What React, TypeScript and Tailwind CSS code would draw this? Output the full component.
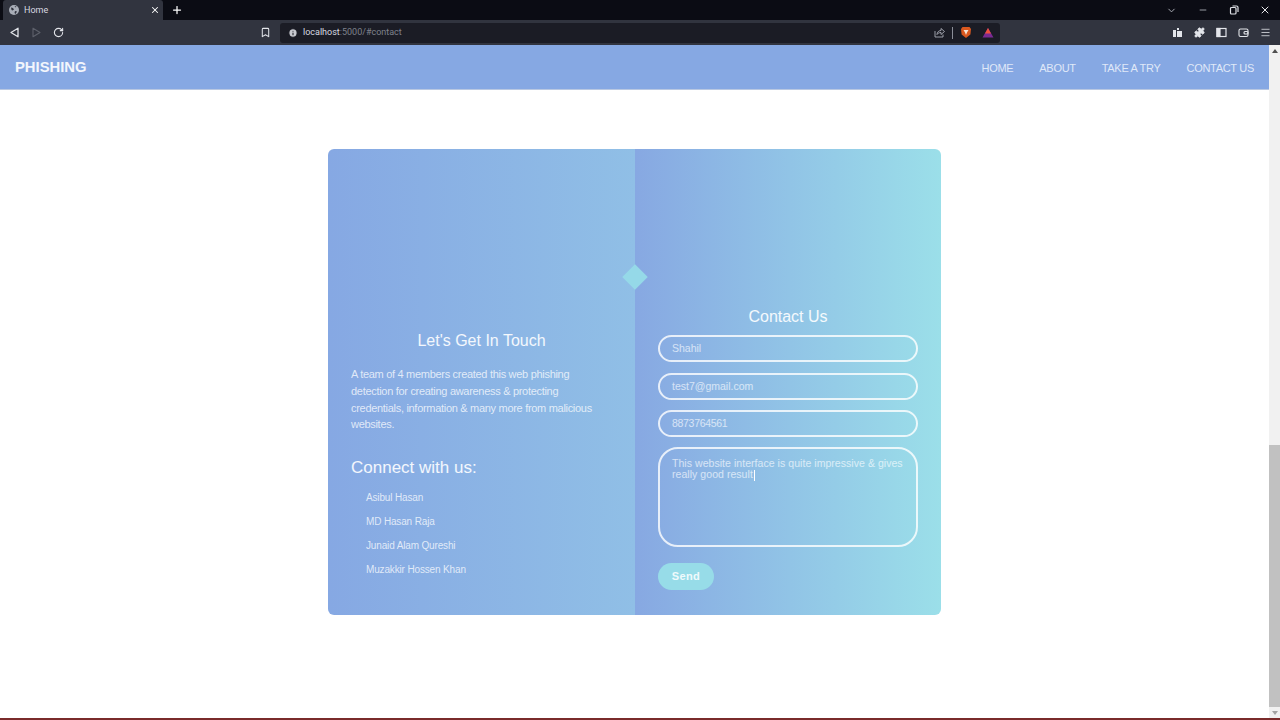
import { ChevronDown, Minus, Puzzle, X, Plus, RotateCw, Bookmark, Info, Menu } from "lucide-react";

const members = ["Asibul Hasan", "MD Hasan Raja", "Junaid Alam Qureshi", "Muzakkir Hossen Khan"];
const navLinks = ["HOME", "ABOUT", "TAKE A TRY", "CONTACT US"];
const fields = [
  { value: "Shahil", className: "tracking-[0px]" },
  { value: "test7@gmail.com", className: "tracking-[0px]" },
  { value: "8873764561", className: "tracking-[-0.3px]" },
];

function BrowserChrome() {
  return (
    <div className="shrink-0 font-['Roboto',sans-serif]">
      <div className="flex h-5 items-end bg-[#0b0c14] pl-[3px] text-[#d8dae0]">
        <div className="flex h-[20px] w-[160px] items-center rounded-t-[3px] bg-[#31343f] pl-[6px] pr-[3px]">
          <svg className="h-[10px] w-[10px]" viewBox="0 0 10 10">
            <circle cx="5" cy="5" r="5" fill="#a9aeb8" />
            <path d="M2 2.500l2 .5 1 1.500-1.500 1-1-.5zM6 6l2 .5-1.500 2.500-1-1zM5.500 1l2 .5-1 1z" fill="#31343f" />
          </svg>
          <span className="ml-[5px] flex-1 text-[9px] leading-none">Home</span>
          <X className="h-[10px] w-[10px] text-white" strokeWidth={2.5} />
        </div>
        <div className="flex h-5 w-[28px] items-center justify-center">
          <Plus className="h-[12px] w-[12px] text-white" strokeWidth={2.5} />
        </div>
        <div className="flex-1" />
        <div className="flex h-5 items-center">
          <div className="flex w-[31px] justify-center"><ChevronDown className="h-[11px] w-[11px] text-[#b5b8c0]" /></div>
          <div className="flex w-[31px] justify-center"><Minus className="h-[10px] w-[10px] text-[#b5b8c0]" /></div>
          <div className="flex w-[31px] justify-center">
            <svg className="h-[10px] w-[10px]" viewBox="0 0 10 10" fill="none" stroke="#dfe1e6" strokeWidth="1.2">
              <rect x="1.5" y="2.5" width="5.5" height="6.5" rx="1" />
              <path d="M3.5 1h4a1.5 1.5 0 0 1 1.5 1.5v4.5" />
            </svg>
          </div>
          <div className="flex w-[31px] justify-center"><X className="h-[12px] w-[12px] text-[#e8e9ec]" /></div>
        </div>
      </div>
      <div className="flex h-[25px] items-center bg-[#31343f] pr-[9px]">
        <div className="flex w-[68px] items-center gap-[11px] pl-[9px]">
          <svg className="h-[11px] w-[11px]" viewBox="0 0 11 11" fill="none" stroke="#e3e5ea" strokeWidth="1.3"><path d="M9 1.2v8.6L2 5.5z" strokeLinejoin="round" /></svg>
          <svg className="h-[11px] w-[11px]" viewBox="0 0 11 11" fill="none" stroke="#5d606b" strokeWidth="1.1"><path d="M2 1.2v8.6L9 5.5z" strokeLinejoin="round" /></svg>
          <RotateCw className="h-[11px] w-[11px] text-[#e3e5ea]" strokeWidth={2.4} />
        </div>
        <div className="flex w-[212px] justify-end pr-[9px]">
          <Bookmark className="h-[11px] w-[11px] text-[#e3e5ea]" strokeWidth={2.2} />
        </div>
        <div className="flex h-[20px] w-[720px] items-center rounded-[3px] bg-[#1b1c25] pl-[8px] pr-[6px]">
          <Info className="h-[10px] w-[10px] fill-[#c8cad0] text-[#1b1c25]" strokeWidth={2.5} />
          <span className="ml-[5px] flex-1 text-[9px] leading-none text-[#7f828c]">
            <span className="text-[#d8dae0]">localhost</span>:5000/#contact
          </span>
          <svg className="h-[11px] w-[11px]" viewBox="0 0 11 11" fill="none" stroke="#a9acb5" strokeWidth="0.9">
            <path d="M1 4v6h8V7.5" />
            <path d="M3 7.5c0-2.5 2-4 4-4V1.5l3.5 3-3.5 3V5.5C5 5.5 4 6.3 3 7.5z" strokeLinejoin="round" />
          </svg>
          <div className="mx-[7px] h-[12px] w-px bg-[#8b8e98]" />
          <svg className="h-[13px] w-[12px]" viewBox="0 0 12 13">
            <path d="M2.5 1h7L11 3l-.6 5.5L6 12 1.6 8.5 1 3z" fill="#d9581f" />
            <path d="M3.5 4h5L7 6.5 6 9 5 6.5z" fill="#f6e6d8" />
          </svg>
          <svg className="ml-[10px] h-[11px] w-[12px]" viewBox="0 0 12 11">
            <path d="M6 1l5.5 9.5H.5z" fill="#7a2a92" />
            <path d="M6 1l3 5.5H3z" fill="#f0503c" />
          </svg>
        </div>
        <div className="flex flex-1 items-center justify-end gap-[11px]">
          <svg className="h-[11px] w-[11px]" viewBox="0 0 11 11" fill="#e3e5ea"><path d="M1 3h3v7H1zM5 1h2v2H5zM5 4h5v6H5z" /></svg>
          <Puzzle className="h-[11px] w-[11px] fill-[#e3e5ea] text-[#e3e5ea]" />
          <svg className="h-[11px] w-[11px]" viewBox="0 0 11 11" fill="none" stroke="#e3e5ea" strokeWidth="1.2"><rect x="1" y="1.5" width="9" height="8" /><rect x="1" y="1.5" width="3" height="8" fill="#e3e5ea" /></svg>
          <svg className="h-[11px] w-[11px]" viewBox="0 0 11 11" fill="none" stroke="#e3e5ea" strokeWidth="1.1"><rect x="1" y="2" width="9" height="7.5" rx="1.5" /><rect x="6" y="4.5" width="4" height="2.5" rx="1" /></svg>
          <Menu className="h-[11px] w-[11px] text-[#c8cad0]" />
        </div>
      </div>
    </div>
  );
}

function Scrollbar() {
  return (
    <div className="flex w-[11px] shrink-0 flex-col items-center bg-[#f1f1f1]">
      <div className="flex h-[12px] items-center justify-center">
        <div className="h-0 w-0 border-x-[3px] border-b-[4px] border-x-transparent border-b-[#505050]" />
      </div>
      <div className="mt-[388px] h-[262px] w-full bg-[#c1c1c1]" />
      <div className="flex flex-1 items-center justify-center">
        <div className="h-0 w-0 border-x-[3px] border-t-[4px] border-x-transparent border-t-[#a3a3a3]" />
      </div>
    </div>
  );
}

export default function App() {
  return (
    <div className="flex h-screen flex-col overflow-hidden bg-white font-['Liberation_Sans',sans-serif]">
      <BrowserChrome />
      <div className="flex min-h-0 flex-1">
        <div className="flex min-w-0 flex-1 flex-col">
          <nav className="flex h-[45px] shrink-0 items-center justify-between border-b border-[#b9c8e2] bg-[#86a8e3] px-[15px]">
            <span className="text-[14.8px] font-bold text-white/90">PHISHING</span>
            <div className="flex gap-[26px] pt-[2px] text-[11px] tracking-[-0.3px] text-white/75">
              {navLinks.map((link) => (
                <a key={link}>{link}</a>
              ))}
            </div>
          </nav>
          <main className="flex flex-1 justify-center pt-[59px]">
            <div className="relative flex h-[466px] w-[613px] overflow-hidden rounded-[6px]">
              <section className="flex w-[307px] flex-col bg-gradient-to-r from-[#86a8e3] to-[#90bfe6] pt-[182px] text-white/75">
                <h3 className="text-center text-[16px] leading-5 text-white/90">Let's Get In Touch</h3>
                <div className="px-[23px]">
                  <p className="mt-[15px] w-[250px] text-[11px] leading-[16.8px] tracking-[-0.3px]">
                    A team of 4 members created this web phishing detection for creating awareness &amp; protecting credentials, information &amp; many more from malicious websites.
                  </p>
                  <h4 className="mt-[23px] text-[17px] leading-6 text-white/90">Connect with us:</h4>
                  <ul className="mt-[11px] flex flex-col gap-[10px] pl-[15px] text-[10px] leading-[14px] tracking-[-0.15px]">
                    {members.map((name) => (
                      <li key={name}>{name}</li>
                    ))}
                  </ul>
                </div>
              </section>
              <section className="flex flex-1 flex-col bg-gradient-to-r from-[#87a8e2] to-[#9bdfe9] px-[23px] pt-[158px]">
                <h3 className="text-center text-[16px] leading-5 text-white/90">Contact Us</h3>
                <div className="mt-[8px] flex flex-col gap-[10.5px]">
                  {fields.map((field) => (
                    <div key={field.value} className={`flex h-[27px] items-center rounded-full border-2 border-white/80 px-[12px] pt-px text-[10.5px] text-white/65 ${field.className}`}>
                      {field.value}
                    </div>
                  ))}
                </div>
                <div className="mt-[10px] h-[100px] rounded-[20px] border-2 border-white/80 px-[12px] pt-[9px] text-[10.5px] leading-[11px] tracking-[0.05px] text-white/65">
                  This website interface is quite impressive &amp; gives really good result
                  <span className="ml-px inline-block h-[11px] w-px bg-white align-middle" />
                </div>
                <button className="mt-[16px] h-[27px] w-[56px] rounded-full bg-[#97dce8] text-[11px] font-bold tracking-[0.4px] text-white/85">Send</button>
              </section>
              <div className="absolute left-[298px] top-[119px] h-[18px] w-[18px] rotate-45 bg-[#95d9e8]" />
            </div>
          </main>
        </div>
        <Scrollbar />
      </div>
      <div className="h-[2px] shrink-0 bg-[#7a2b2b]" />
    </div>
  );
}
